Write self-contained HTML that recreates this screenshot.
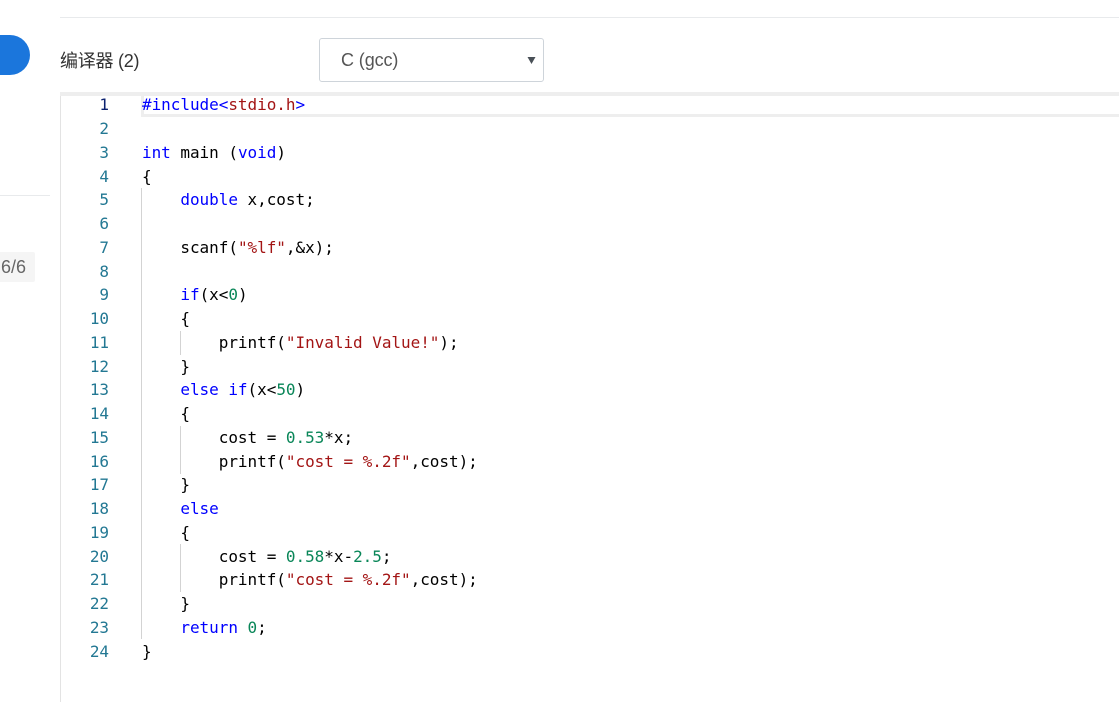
<!DOCTYPE html>
<html lang="zh">
<head>
<meta charset="utf-8">
<style>
html,body{margin:0;padding:0;width:1119px;height:702px;overflow:hidden;background:#fff}
body{position:relative;font-family:"Liberation Sans","Noto Sans CJK SC",sans-serif}
.a{position:absolute;box-sizing:border-box}
.ed{font-family:"DejaVu Sans Mono","Liberation Mono",monospace;font-size:16px;color:#000;letter-spacing:-0.04px}
.l{position:absolute;left:142px;height:24px;line-height:24px;white-space:pre;margin-top:1px}
.n{position:absolute;left:70px;width:39px;text-align:right;height:24px;line-height:24px;color:#237893;margin-top:1px}
.k{color:#00f}.s{color:#a31515}.d{color:#098658}
.g{position:absolute;width:1px;background:#d3d3d3}
</style>
</head>
<body>
<div class="a" style="left:60px;top:17px;width:1059px;height:1px;background:#e8eaec"></div>
<div class="a" style="left:-30px;top:35px;width:60px;height:40px;border-radius:20px;background:#1b76dc"></div>
<div class="a" style="left:0;top:195px;width:50px;height:1px;background:#e8eaec"></div>
<div class="a" style="left:-10px;top:252px;width:45px;height:30px;border-radius:2px;background:#f5f5f5;color:#666;font-size:18px;line-height:30px;text-align:right;padding-right:9px">6/6</div>
<div class="a" style="left:60px;top:48px;font-size:18px;line-height:26px;color:#333;white-space:pre;letter-spacing:-0.25px">编译器 (2)</div>
<div class="a" style="left:319px;top:38px;width:225px;height:44px;border:1px solid #ced4da;border-radius:3px;background:#fff;color:#555;font-size:18px;line-height:42px;padding-left:21px;letter-spacing:-0.1px">C (gcc)</div>
<svg class="a" style="left:527px;top:56px" width="9" height="9"><path d="M0.5 1H8.5L4.5 8Z" fill="#495057"/></svg>

<div class="a" style="left:60px;top:92px;width:1px;height:610px;background:#e3e3e3"></div>
<div class="a" style="left:60px;top:92px;width:1059px;height:4px;background:#eee"></div>
<div class="a" style="left:141px;top:92px;width:978px;height:25px;border-top:4px solid #eee;border-bottom:3px solid #eee;border-left:3px solid #eee"></div>

<div class="ed">
<div class="g" style="left:141px;top:188px;height:451px"></div>
<div class="g" style="left:180px;top:331px;height:24px"></div>
<div class="g" style="left:180px;top:426px;height:48px"></div>
<div class="g" style="left:180px;top:544px;height:48px"></div>

<div class="n" style="top:92px;color:#0b216f">1</div>
<div class="n" style="top:116px">2</div>
<div class="n" style="top:140px">3</div>
<div class="n" style="top:164px">4</div>
<div class="n" style="top:187px">5</div>
<div class="n" style="top:211px">6</div>
<div class="n" style="top:235px">7</div>
<div class="n" style="top:259px">8</div>
<div class="n" style="top:282px">9</div>
<div class="n" style="top:306px">10</div>
<div class="n" style="top:330px">11</div>
<div class="n" style="top:354px">12</div>
<div class="n" style="top:377px">13</div>
<div class="n" style="top:401px">14</div>
<div class="n" style="top:425px">15</div>
<div class="n" style="top:449px">16</div>
<div class="n" style="top:472px">17</div>
<div class="n" style="top:496px">18</div>
<div class="n" style="top:520px">19</div>
<div class="n" style="top:544px">20</div>
<div class="n" style="top:567px">21</div>
<div class="n" style="top:591px">22</div>
<div class="n" style="top:615px">23</div>
<div class="n" style="top:639px">24</div>

<div class="l" style="top:92px"><span class="k">#include&lt;</span><span class="s">stdio.h</span><span class="k">&gt;</span></div>
<div class="l" style="top:140px"><span class="k">int</span> main (<span class="k">void</span>)</div>
<div class="l" style="top:164px">{</div>
<div class="l" style="top:187px">    <span class="k">double</span> x,cost;</div>
<div class="l" style="top:235px">    scanf(<span class="s">"%lf"</span>,&amp;x);</div>
<div class="l" style="top:282px">    <span class="k">if</span>(x&lt;<span class="d">0</span>)</div>
<div class="l" style="top:306px">    {</div>
<div class="l" style="top:330px">        printf(<span class="s">"Invalid Value!"</span>);</div>
<div class="l" style="top:354px">    }</div>
<div class="l" style="top:377px">    <span class="k">else if</span>(x&lt;<span class="d">50</span>)</div>
<div class="l" style="top:401px">    {</div>
<div class="l" style="top:425px">        cost = <span class="d">0.53</span>*x;</div>
<div class="l" style="top:449px">        printf(<span class="s">"cost = %.2f"</span>,cost);</div>
<div class="l" style="top:472px">    }</div>
<div class="l" style="top:496px">    <span class="k">else</span></div>
<div class="l" style="top:520px">    {</div>
<div class="l" style="top:544px">        cost = <span class="d">0.58</span>*x-<span class="d">2.5</span>;</div>
<div class="l" style="top:567px">        printf(<span class="s">"cost = %.2f"</span>,cost);</div>
<div class="l" style="top:591px">    }</div>
<div class="l" style="top:615px">    <span class="k">return</span> <span class="d">0</span>;</div>
<div class="l" style="top:639px">}</div>
</div>
</body>
</html>
